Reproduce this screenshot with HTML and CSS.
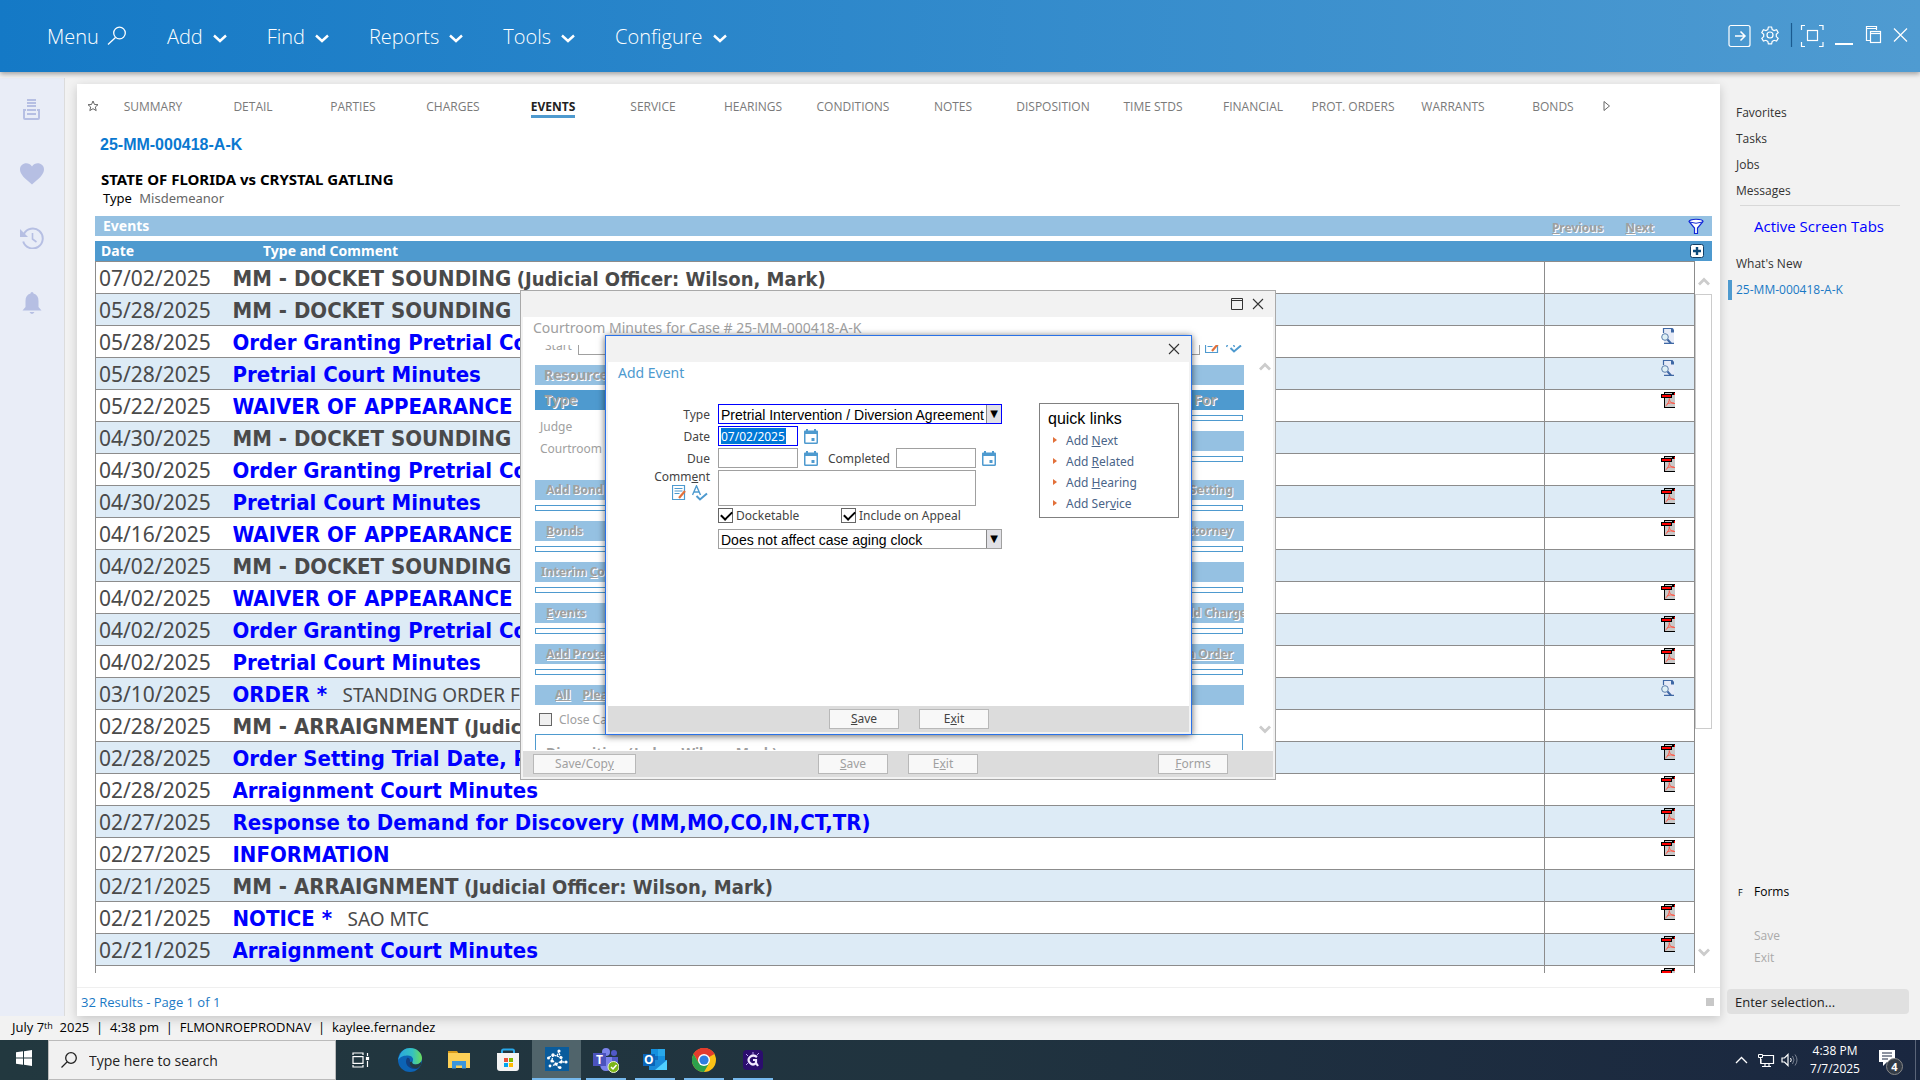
FILE: index.html
```html
<!DOCTYPE html>
<html lang="en">
<head>
    <meta charset="UTF-8">
    <meta name="viewport" content="width=device-width, initial-scale=1.0">
    <title>25-MM-000418-A-K - Events</title>
    <link rel="stylesheet" href="styles.css">
</head>
<body>

    <!-- Shared icons -->
    <svg class="sprite">
        <symbol id="i-chev" viewBox="0 0 14 10"><path d="M1 2.5 7 8l6-5.5" fill="none" stroke="currentColor" stroke-width="2.4"/></symbol>
        <symbol id="i-x" viewBox="0 0 12 12"><path d="M1 1l10 10M11 1 1 11" fill="none" stroke="currentColor" stroke-width="1.1"/></symbol>
        <symbol id="i-pdf" viewBox="0 0 14 16">
            <path d="M3 0h11v16H3z" fill="#000"/>
            <path d="M4 1h7v1H4zM4 6h10v9H4z" fill="#c8c8c8"/>
            <path d="M11 3h3v3h-3z" fill="#c8c8c8"/>
            <path d="M0 2h11v4H0z" fill="#000"/><path d="M1 3h9v2H1zM13 1h1v2h-1z" fill="#f00"/>
            <path d="M4.500 14c2-1 4-5 3.800-7.500C8.500 10 11 12 14 11.500M6 12c2-1 5-1.500 7-1" fill="none" stroke="#ff5a4a" stroke-width="1"/>
        </symbol>
        <symbol id="i-doc" viewBox="0 0 14 16">
            <path d="M3 0h10v16H3z" fill="#e6ebf7"/>
            <path d="M2.500 5V.5h8.500M3 15.300h10" fill="none" stroke="#3f68a5" stroke-width="1.200"/>
            <path d="M10 0h1.500L13 2v2.500h-3z" fill="#3f68a5"/>
            <circle cx="4" cy="9" r="3.300" fill="#dff0f5" stroke="#5d7fae"/><path d="M6.500 11.500 10 15.500" stroke="#3f68a5" stroke-width="2"/>
        </symbol>
        <symbol id="i-cal" viewBox="0 0 14 15">
            <path d="M0 2.500Q0 1.500 1 1.500h1V0h2v1.500h6V0h2v1.500h1q1 0 1 1v11q0 1.500-1.500 1.500h-11Q0 15 0 13.500zM1.500 5v8.500h11V5z" fill="#4e9acf" fill-rule="evenodd"/>
            <path d="M7.500 9h3v3h-3z" fill="#4e9acf"/>
        </symbol>
        <symbol id="i-note" viewBox="0 0 14 15">
            <path d="M.5.5h12v14H.5z" fill="#fff" stroke="#4e9acf" stroke-width="1.200"/>
            <path d="M2.500 3.500h8M2.500 6h8M2.500 8.500h5" stroke="#4e9acf"/>
            <path d="M7 13l6-7" stroke="#e2703a" stroke-width="2.200"/>
        </symbol>
        <symbol id="i-spell" viewBox="0 0 16 16">
            <path d="M.5 10 4.500.8 8.500 10M2 7h5" fill="none" stroke="#4e9acf" stroke-width="1.400"/>
            <path d="M4.500 11l3.500 3.500L15 8.500" fill="none" stroke="#4e9acf" stroke-width="2"/>
        </symbol>
        <symbol id="i-arrow" viewBox="0 0 12 9"><path d="M1 7.500 6 2.500l5 5" fill="none" stroke="#ccc" stroke-width="2.800"/></symbol>
    </svg>

    <!-- Top menu -->
    <header class="topbar">
        <nav class="menu">
            <button class="menu-search">Menu <svg width="20" height="20" viewBox="0 0 20 20"><circle cx="12.500" cy="7" r="5.800" fill="none" stroke="#fff" stroke-width="1.300"/><path d="M8.500 11.500 1 18.500" stroke="#fff" stroke-width="1.300"/></svg></button>
            <button>Add <svg class="chev"><use href="#i-chev"/></svg></button>
            <button>Find <svg class="chev"><use href="#i-chev"/></svg></button>
            <button>Reports <svg class="chev"><use href="#i-chev"/></svg></button>
            <button>Tools <svg class="chev"><use href="#i-chev"/></svg></button>
            <button>Configure <svg class="chev"><use href="#i-chev"/></svg></button>
        </nav>
        <svg class="win-icons" width="180" height="28" viewBox="0 0 180 28" fill="none" stroke="#fff" stroke-width="1.200">
            <rect x="1" y="3.500" width="21" height="21" rx="2"/>
            <path d="M7 14h10M12.500 9.500 17 14l-4.500 4.500" stroke-width="1.500"/>
            <circle cx="42" cy="13" r="3"/>
            <path d="M40.400 5h3.200l.6 2.500 1.900 1.100 2.500-.8 1.600 2.800-1.900 1.700v2.300l1.900 1.700-1.600 2.800-2.500-.8-1.900 1.100-.6 2.500h-3.200l-.6-2.500-1.900-1.100-2.500.8-1.600-2.800 1.900-1.700v-2.300l-1.900-1.700 1.600-2.800 2.500.8 1.900-1.100z"/>
            <path d="M63.500 1v24" stroke="#1a5a8f"/>
            <path d="M73.500 8V3.500H77M91 3.500h4V8M95 20v4.500h-4M77 24.500h-3.500V20"/>
            <rect x="79.500" y="8.500" width="10" height="10"/>
            <path d="M107 22h18" stroke-width="2"/>
            <path d="M142 18.500h-3.500v-14h10V8M138.500 6.500h10"/><rect x="142.500" y="9.500" width="10" height="11"/><path d="M142.500 11.500h10"/>
            <path d="M166 6.500l13 13M179 6.500l-13 13"/>
        </svg>
    </header>

    <div class="workspace">
        <!-- Left rail -->
        <aside class="rail">
            <svg width="18" height="22" viewBox="0 0 18 22"><path d="M4 1h9M4 4h9M4 7h9M4 11h9M4 15h9" stroke="#b6bfe3" stroke-width="2"/><path d="M3 11H1v8q0 1 1 1h13q1 0 1-1v-8h-2" fill="none" stroke="#b6bfe3" stroke-width="2"/></svg>
            <svg width="24" height="22" viewBox="0 0 24 22"><path d="M12 21.500C5 15.500 0 11.500 0 6.500 0 0 8.500-2 12 3.500 15.500-2 24 0 24 6.500c0 5-5 9-12 15z" fill="#b6bfe3"/></svg>
            <svg width="24" height="22" viewBox="0 0 24 22"><path d="M3.800 7A10 10 0 1 1 3.200 14.500" fill="none" stroke="#b6bfe3" stroke-width="2"/><path d="M0 2v8h8z" fill="#b6bfe3"/><path d="M12.500 6v6l4 3" fill="none" stroke="#b6bfe3" stroke-width="1.600"/></svg>
            <svg width="20" height="24" viewBox="0 0 20 24"><path d="M8.500 2.500a1.500 1.500 0 0 1 3 0C15 3.500 16.500 6 16.500 10v6l3 3.500H.5L3.500 16v-6c0-4 1.500-6.500 5-7.500zM7.500 21h5q-2.500 4-5 0z" fill="#b6bfe3"/></svg>
        </aside>

        <!-- Case card -->
        <main class="card">
            <nav class="tabs">
                <svg class="star" width="12" height="12" viewBox="0 0 12 12"><path d="M6 1l1.500 3.500 3.500.2-2.700 2.300.9 3.600L6 8.700l-3.200 1.900.9-3.600L1 4.700l3.500-.2z" fill="none" stroke="#666"/></svg>
                <a href="#">SUMMARY</a><a href="#">DETAIL</a><a href="#">PARTIES</a><a href="#">CHARGES</a><a href="#" class="active"><span>EVENTS</span></a><a href="#">SERVICE</a><a href="#">HEARINGS</a><a href="#">CONDITIONS</a><a href="#">NOTES</a><a href="#">DISPOSITION</a><a href="#">TIME STDS</a><a href="#">FINANCIAL</a><a href="#">PROT. ORDERS</a><a href="#">WARRANTS</a><a href="#">BONDS</a>
                <svg width="8" height="12" viewBox="0 0 8 12"><path d="M1 1.500 6.500 6 1 10.500z" fill="none" stroke="#666"/></svg>
            </nav>

            <div class="case-head">
                <h1>25-MM-000418-A-K</h1>
                <h2>STATE OF FLORIDA vs CRYSTAL GATLING</h2>
                <p><span>Type</span> Misdemeanor</p>
            </div>

            <div class="events">
                <div class="section-bar">
                    <span class="section-title">Events</span>
                    <a href="#" class="embossed prev"><u>P</u>revious</a>
                    <a href="#" class="embossed next"><u>N</u>ext</a>
                    <svg width="16" height="16" viewBox="0 0 16 16"><path d="M1 3.500C1 .5 15 .5 15 3.500L9.500 10v5.500h-3V10z" fill="#fff" stroke="#1128d8" stroke-width="1.200"/><path d="M1.500 4q6.500 2.500 13 0" fill="none" stroke="#1128d8"/></svg>
                </div>
                <div class="column-bar">
                    <span class="col-date">Date</span>
                    <span class="col-type">Type and Comment</span>
                    <svg width="14" height="14" viewBox="0 0 14 14"><rect x=".5" y=".5" width="13" height="13" rx="2" fill="#fff" stroke="#123f66"/><path d="M7 3v8M3 7h8" stroke="#0e4a7a" stroke-width="2.400"/></svg>
                </div>
                <div class="scroll-area">
                    <div class="table-clip">
                        <table>
                            <tr><td class="date">07/02/2025</td><td class="text"><b>MM - DOCKET SOUNDING</b> <b class="officer">(Judicial Officer: Wilson, Mark)</b></td><td class="icon"></td></tr>
                            <tr><td class="date">05/28/2025</td><td class="text"><b>MM - DOCKET SOUNDING</b></td><td class="icon"></td></tr>
                            <tr><td class="date">05/28/2025</td><td class="text"><a href="#">Order Granting Pretrial Continuance</a></td><td class="icon"><svg><use href="#i-doc"/></svg></td></tr>
                            <tr><td class="date">05/28/2025</td><td class="text"><a href="#">Pretrial Court Minutes</a></td><td class="icon"><svg><use href="#i-doc"/></svg></td></tr>
                            <tr><td class="date">05/22/2025</td><td class="text"><a href="#">WAIVER OF APPEARANCE</a></td><td class="icon"><svg><use href="#i-pdf"/></svg></td></tr>
                            <tr><td class="date">04/30/2025</td><td class="text"><b>MM - DOCKET SOUNDING</b></td><td class="icon"></td></tr>
                            <tr><td class="date">04/30/2025</td><td class="text"><a href="#">Order Granting Pretrial Continuance</a></td><td class="icon"><svg><use href="#i-pdf"/></svg></td></tr>
                            <tr><td class="date">04/30/2025</td><td class="text"><a href="#">Pretrial Court Minutes</a></td><td class="icon"><svg><use href="#i-pdf"/></svg></td></tr>
                            <tr><td class="date">04/16/2025</td><td class="text"><a href="#">WAIVER OF APPEARANCE</a></td><td class="icon"><svg><use href="#i-pdf"/></svg></td></tr>
                            <tr><td class="date">04/02/2025</td><td class="text"><b>MM - DOCKET SOUNDING</b></td><td class="icon"></td></tr>
                            <tr><td class="date">04/02/2025</td><td class="text"><a href="#">WAIVER OF APPEARANCE</a></td><td class="icon"><svg><use href="#i-pdf"/></svg></td></tr>
                            <tr><td class="date">04/02/2025</td><td class="text"><a href="#">Order Granting Pretrial Continuance</a></td><td class="icon"><svg><use href="#i-pdf"/></svg></td></tr>
                            <tr><td class="date">04/02/2025</td><td class="text"><a href="#">Pretrial Court Minutes</a></td><td class="icon"><svg><use href="#i-pdf"/></svg></td></tr>
                            <tr><td class="date">03/10/2025</td><td class="text"><a href="#">ORDER *</a> <span class="note">STANDING ORDER FOR PRETRIAL</span></td><td class="icon"><svg><use href="#i-doc"/></svg></td></tr>
                            <tr><td class="date">02/28/2025</td><td class="text"><b>MM - ARRAIGNMENT</b> <b class="officer">(Judicial Officer: Wilson, Mark)</b></td><td class="icon"></td></tr>
                            <tr><td class="date">02/28/2025</td><td class="text"><a href="#">Order Setting Trial Date, Pretrial</a></td><td class="icon"><svg><use href="#i-pdf"/></svg></td></tr>
                            <tr><td class="date">02/28/2025</td><td class="text"><a href="#">Arraignment Court Minutes</a></td><td class="icon"><svg><use href="#i-pdf"/></svg></td></tr>
                            <tr><td class="date">02/27/2025</td><td class="text"><a href="#">Response to Demand for Discovery (MM,MO,CO,IN,CT,TR)</a></td><td class="icon"><svg><use href="#i-pdf"/></svg></td></tr>
                            <tr><td class="date">02/27/2025</td><td class="text"><a href="#">INFORMATION</a></td><td class="icon"><svg><use href="#i-pdf"/></svg></td></tr>
                            <tr><td class="date">02/21/2025</td><td class="text"><b>MM - ARRAIGNMENT</b> <b class="officer">(Judicial Officer: Wilson, Mark)</b></td><td class="icon"></td></tr>
                            <tr><td class="date">02/21/2025</td><td class="text"><a href="#">NOTICE *</a> <span class="note">SAO MTC</span></td><td class="icon"><svg><use href="#i-pdf"/></svg></td></tr>
                            <tr><td class="date">02/21/2025</td><td class="text"><a href="#">Arraignment Court Minutes</a></td><td class="icon"><svg><use href="#i-pdf"/></svg></td></tr>
                            <tr><td class="date"></td><td class="text"></td><td class="icon"><svg><use href="#i-pdf"/></svg></td></tr>
                        </table>
                    </div>
                    <div class="scrollbar">
                        <svg class="arrow"><use href="#i-arrow"/></svg>
                        <div class="thumb"></div>
                        <svg class="arrow down"><use href="#i-arrow"/></svg>
                    </div>
                </div>
            </div>

            <footer class="card-foot">
                <span>32 Results - Page 1 of 1</span>
                <i></i>
            </footer>
        </main>

        <!-- Right panel -->
        <aside class="panel">
            <nav>
                <a href="#">Favorites</a>
                <a href="#">Tasks</a>
                <a href="#">Jobs</a>
                <a href="#">Messages</a>
            </nav>
            <hr>
            <h3>Active Screen Tabs</h3>
            <nav>
                <a href="#">What's New</a>
                <a href="#" class="current">25-MM-000418-A-K</a>
            </nav>
            <div class="panel-actions">
                <a href="#" class="forms"><kbd>F</kbd>Forms</a>
                <a href="#" class="off">Save</a>
                <a href="#" class="off">Exit</a>
            </div>
            <input type="text" class="selection" aria-label="Selection" placeholder="Enter selection...">
        </aside>
    </div>

    <div class="status">July 7<sup>th</sup>&nbsp; 2025 &nbsp;|&nbsp; 4:38 pm &nbsp;|&nbsp; FLMONROEPRODNAV &nbsp;|&nbsp; kaylee.fernandez</div>

    <!-- Windows taskbar -->
    <div class="taskbar">
        <button class="start" aria-label="Start"><svg width="16" height="16" viewBox="0 0 16 16"><path d="M0 2.300 7 1.300V7.500H0zM8 1.200 16 0v7.500H8zM0 8.500h7v6.200l-7-1zM8 8.500h8V16l-8-1.200z" fill="#fff"/></svg></button>
        <label class="search">
            <svg width="16" height="16" viewBox="0 0 16 16"><circle cx="10" cy="6" r="5.300" fill="none" stroke="#222" stroke-width="1.300"/><path d="M6 10 .5 15.500" stroke="#222" stroke-width="1.300"/></svg>
            <input type="text" placeholder="Type here to search">
        </label>
        <div class="apps">
            <button class="app"><svg width="18" height="16" viewBox="0 0 18 16" fill="none" stroke="#fff" stroke-width="1.200"><path d="M1 3V1h10v2M1 13v2h10v-2"/><rect x="1" y="4.600" width="10" height="6.800"/><path d="M15.500 1v3M15.500 9v6"/><rect x="14.500" y="5.500" width="2" height="2" fill="#fff"/></svg></button>
            <button class="app">
                <svg width="24" height="24" viewBox="0 0 24 24">
                    <defs><linearGradient id="edge" x1="0" x2="1"><stop offset="0" stop-color="#2aa5e0"/><stop offset=".6" stop-color="#35c1c0"/><stop offset="1" stop-color="#6bdc5a"/></linearGradient></defs>
                    <circle cx="12" cy="12" r="12" fill="#0c63b5"/>
                    <path d="M1 9C3 3 7 0 12 0c7 0 12 5 12 10 0 4-3 6.500-6.500 6.500-3 0-4-1.500-3-3 2-3-1-6-4.500-6S3 8 0 12z" fill="url(#edge)"/>
                    <path d="M9 10c-3 5 1 11 8 11 2 0 4-.7 5-1.500-5 1-11-2-10-7 .2-2-2-3.500-3-2.500z" fill="#123f80"/>
                    <path d="M14.500 13.500c-1 1.500 0 3 3 3 2 0 4-.8 5.500-2.500 1.500 2-2 6-4 6-4 1-8-2-7-6z" fill="#233a42"/>
                </svg>
            </button>
            <button class="app"><svg width="22" height="18" viewBox="0 0 22 18"><path d="M0 0h9l2 3H0z" fill="#d99c1c"/><path d="M0 2h22v15H0z" fill="#fdd057"/><path d="M4 17.500V10h14v7.500h-4v-3H8v3z" fill="#3c96dc"/></svg></button>
            <button class="app"><svg width="24" height="24" viewBox="0 0 24 24"><path d="M6 6V3q0-1.500 1.500-1.500h9Q18 1.500 18 3v3" fill="none" stroke="#28a8ea" stroke-width="2"/><path d="M1 5h22v15q0 3-3 3H4q-3 0-3-3z" fill="#f3f3f3"/><path d="M8 10h4v4H8z" fill="#e8503a"/><path d="M13 10h4v4h-4z" fill="#7fba00"/><path d="M8 15h4v4H8z" fill="#00a4ef"/><path d="M13 15h4v4h-4z" fill="#ffb900"/></svg></button>
            <button class="app open on"><svg width="24" height="24" viewBox="0 0 24 24"><path d="M0 0h24v24H0z" fill="#0a5c9c"/><path d="M14 4l-2 5-4-1-5 3M12 9l4 2 1 4 4 0M16 11l-2-5M8 8l-1 5 4 4-4 2M11 17l4-2M11 17l3 4" stroke="#fff" stroke-width="1.300" fill="none" stroke-dasharray="2 1"/><g fill="#fff"><circle cx="14" cy="4" r="1.600"/><circle cx="3.500" cy="11" r="1.500"/><circle cx="8" cy="8" r="1.700"/><circle cx="16" cy="10.500" r="1.600"/><circle cx="21" cy="15" r="1.600"/><circle cx="16" cy="15" r="1.500"/><circle cx="7" cy="14" r="1.600"/><circle cx="11" cy="17" r="1.500"/><circle cx="15" cy="20.500" r="1.500"/><circle cx="5" cy="19" r="1.400"/></g></svg></button>
            <button class="app open">
                <svg width="26" height="26" viewBox="0 0 26 26"><circle cx="13" cy="5" r="4" fill="#7b83eb"/><circle cx="21" cy="6" r="3" fill="#5059c9"/><path d="M16 10h9v7q-1 5-6 5z" fill="#5059c9"/><path d="M7 10h12v9q-1 5-6 5t-6-6z" fill="#7b83eb"/><path d="M0 6h13v13H0z" fill="#4b53bc"/><text x="3" y="17" class="logo-letter">T</text><circle cx="20.500" cy="20" r="5.500" fill="#7cb518" stroke="#e8f2d4"/><path d="M18 20l2 2 3.500-4" fill="none" stroke="#fff" stroke-width="1.500"/></svg>
            </button>
            <button class="app open">
                <svg width="24" height="24" viewBox="0 0 24 24"><path d="M8 1h14v14H8z" fill="#1490df"/><path d="M15 1h7v7h-7z" fill="#28a8ea"/><path d="M8 8h7v7H8z" fill="#0f6cbd"/><path d="M6 12h18v10H6z" fill="#1a8ad8"/><path d="M24 12 12 22h12z" fill="#50d0ff"/><path d="M0 6h12v12H0z" fill="#0a64b8"/><text x="1" y="16" class="logo-letter">O</text></svg>
            </button>
            <button class="app open">
                <svg width="24" height="24" viewBox="0 0 24 24"><circle cx="12" cy="12" r="12" fill="#fbc116"/><path d="M12 12 1.600 6A12 12 0 0 1 22.400 6z" fill="#e33b2e"/><path d="M12 6h10.400A12 12 0 0 0 1.600 6L6.800 15z" fill="#e33b2e"/><path d="M1.600 6A12 12 0 0 0 12 24l5.200-9H6.800z" fill="#2da14c"/><circle cx="12" cy="12" r="6" fill="#fff"/><circle cx="12" cy="12" r="4.600" fill="#2f7de1"/></svg>
            </button>
            <button class="app open"><svg width="20" height="20" viewBox="0 0 20 20"><rect width="20" height="20" rx="4" fill="#2b0d6e"/><path d="M14 7q-4-3-7 0t0 6 6 0v-3h-3M13 13l2 3" fill="none" stroke="#f1e9ff" stroke-width="2.200"/><path d="M3 4l2 2M16 3l-2 2M3 15l2-2M10 2v2" stroke="#b79af0"/></svg></button>
        </div>
        <div class="tray">
            <svg width="56" height="16" viewBox="0 0 56 16"><path d="M1 11 6.500 5.500 12 11" fill="none" stroke="#fff" stroke-width="1.300"/><path d="M28 3.500h10.500v8H26V7M30 11.500v3M34 11.500v3M27 14.500h9" fill="none" stroke="#fff" stroke-width="1.200"/><path d="M23.500 2.500h4v3h-4zM25.500 5.500v6" fill="none" stroke="#fff"/></svg>
            <svg width="18" height="14" viewBox="0 0 18 14" fill="none" stroke="#fff"><path d="M1 5v4h2.500L7 12.500v-11L3.500 5z" stroke-width="1.200"/><path d="M9.500 5q1.500 2 0 4"/><path d="M11.500 3q3 4 0 8M14 1.500q4 5.500 0 11" stroke="#788090"/></svg>
            <div class="clock">4:38 PM<br>7/7/2025</div>
            <div class="notify">
                <svg width="16" height="16" viewBox="0 0 16 16"><path d="M0 0h16v12H8l-4 4v-4H0z" fill="#fff"/><path d="M3 3h10M3 6h10M3 9h6" stroke="#1a2740"/></svg>
                <span>4</span>
            </div>
        </div>
    </div>

    <!-- Courtroom minutes window -->
    <section class="window minutes">
        <div class="window-bar">
            <svg width="12" height="12" viewBox="0 0 12 12"><path d="M.5.5h11v11H.5zM.5 2.500h11" fill="none" stroke="#333"/></svg>
            <svg width="12" height="12"><use href="#i-x"/></svg>
        </div>
        <div class="window-body">
            <h4>Courtroom Minutes for Case # 25-MM-000418-A-K</h4>
            <div class="minutes-scroll">
                <div class="minutes-form">
                    <div class="start-row"><label for="start">Start</label><input id="start" type="text"><svg width="14" height="15"><use href="#i-note"/></svg><svg width="16" height="16"><use href="#i-spell"/></svg></div>
                    <div class="bar big"><span>Resources</span></div>
                    <div class="resources">
                        <div>
                            <div class="bar dark big"><span>Type</span></div>
                            <p>Judge</p>
                            <p>Courtroom</p>
                        </div>
                        <div>
                            <div class="bar dark big"><span>For</span></div>
                            <div class="strip"></div>
                            <div class="bar"></div>
                            <div class="strip"></div>
                        </div>
                    </div>
                    <div class="bar"><a href="#">Add Bond</a><a href="#">Setting</a></div>
                    <div class="strip"></div>
                    <div class="bar"><a href="#"><u>B</u>onds</a><a href="#">Attorney</a></div>
                    <div class="strip"></div>
                    <div class="bar interim"><a href="#">Interim <u>C</u>onditions</a></div>
                    <div class="strip"></div>
                    <div class="bar"><a href="#"><u>E</u>vents</a><a href="#" class="edge">Add Char<u>g</u>e</a></div>
                    <div class="strip"></div>
                    <div class="bar"><a href="#"><u>Add Protection</u></a><a href="#"><u>Protection Order</u></a></div>
                    <div class="strip"></div>
                    <div class="bar pleas"><a href="#"><u>All</u></a><a href="#"><u>Pleas</u></a></div>
                    <label class="close-case"><input type="checkbox"> Close Case</label>
                    <div class="disposition">Disposition (Judge: Wilson, Mark)</div>
                </div>
                <div class="minutes-arrows">
                    <svg class="arrow"><use href="#i-arrow"/></svg>
                    <svg class="arrow down"><use href="#i-arrow"/></svg>
                </div>
            </div>
            <div class="window-foot">
                <button class="wide">Save/Cop<u>y</u></button>
                <button class="mid"><u>S</u>ave</button>
                <button>E<u>x</u>it</button>
                <button class="last"><u>F</u>orms</button>
            </div>
        </div>
    </section>

    <!-- Add event dialog -->
    <section class="window add-event">
        <div class="window-bar">
            <svg width="12" height="12"><use href="#i-x"/></svg>
        </div>
        <div class="window-body">
            <h4>Add Event</h4>
            <div class="add-body">
                <form class="event-form">
                    <label for="type">Type</label>
                    <div class="row"><span class="select focus"><select id="type"><option>Pretrial Intervention / Diversion Agreement</option></select></span></div>
                    <label for="date">Date</label>
                    <div class="row"><input id="date" class="short marked" type="text" value="07/02/2025"><svg width="14" height="15"><use href="#i-cal"/></svg></div>
                    <label for="due">Due</label>
                    <div class="row"><input id="due" class="short" type="text"><svg width="14" height="15"><use href="#i-cal"/></svg><label for="completed" class="completed">Completed</label><input id="completed" class="short" type="text"><svg width="14" height="15"><use href="#i-cal"/></svg></div>
                    <div class="comment-label"><label for="comment">Comm<u>e</u>nt</label><div><svg width="14" height="15"><use href="#i-note"/></svg><svg width="16" height="16"><use href="#i-spell"/></svg></div></div>
                    <textarea id="comment"></textarea>
                    <span></span>
                    <div class="row checks"><label><input type="checkbox" checked>Docketable</label><label><input type="checkbox" checked>Include on Appeal</label></div>
                    <span></span>
                    <div class="row"><span class="select"><select aria-label="Aging clock"><option>Does not affect case aging clock</option></select></span></div>
                </form>
                <div class="quick">
                    <h5>quick links</h5>
                    <a href="#">Add <u>N</u>ext</a>
                    <a href="#">Add <u>R</u>elated</a>
                    <a href="#">Add <u>H</u>earing</a>
                    <a href="#">Add Ser<u>v</u>ice</a>
                </div>
            </div>
            <div class="window-foot">
                <button><u>S</u>ave</button>
                <button>E<u>x</u>it</button>
            </div>
        </div>
    </section>

</body>
</html>
```
FILE: styles.css
```css
/* General */
* {
    box-sizing: border-box;
}

body {
    margin: 0;
    height: 100vh;
    display: flex;
    flex-direction: column;
    background: #f2f2f2;
    color: #333;
    font-family: "Open Sans", "Noto Sans", sans-serif;
    font-size: 13px;
    overflow: hidden;
}

a {
    color: inherit;
    text-decoration: none;
}

button,
input,
select,
textarea {
    font: inherit;
    color: inherit;
}

h1, h2, h3, h4, h5, p {
    margin: 0;
}

.sprite {
    display: none;
}

/* Top menu */
.topbar {
    flex: none;
    height: 72px;
    display: flex;
    align-items: center;
    justify-content: space-between;
    padding: 0 12px 0 47px;
    background: linear-gradient(90deg, #1479c6, #4f9bd1);
    box-shadow: 0 2px 5px rgba(0, 0, 0, 0.35);
    z-index: 1;
}

.menu {
    display: flex;
    gap: 40px;
}

.menu button {
    display: flex;
    align-items: center;
    gap: 10px;
    padding: 0;
    border: 0;
    background: none;
    color: #fff;
    font-size: 20px;
    font-weight: 300;
}

.menu .menu-search {
    gap: 8px;
}

.chev {
    width: 14px;
    height: 10px;
    margin-top: 4px;
}

/* Workspace */
.workspace {
    flex: 1;
    display: flex;
    min-height: 0;
}

.rail {
    width: 65px;
    margin-top: 6px;
    padding-top: 21px;
    display: flex;
    flex-direction: column;
    align-items: center;
    gap: 42px;
    background: #e9edf7;
    border-right: 1px solid #dcdcdc;
}

.card {
    flex: 1;
    min-width: 0;
    margin: 12px 0 0 12px;
    display: flex;
    flex-direction: column;
    background: #fff;
    box-shadow: 0 3px 10px rgba(0, 0, 0, 0.18);
}

.tabs {
    display: flex;
    align-items: center;
    height: 44px;
    padding-left: 10px;
    font-size: 12px;
    color: #7a7a7a;
}

.tabs .star {
    margin-right: 4px;
}

.tabs a {
    width: 100px;
    text-align: center;
}

.tabs .active span {
    font-weight: 700;
    color: #222;
    border-bottom: 3px solid #4e9acf;
}

.case-head {
    height: 88px;
    padding: 7px 0 0 23px;
}

.case-head h1 {
    font: bold 16px/20px "Liberation Sans", Arial, sans-serif;
    color: #0a78d0;
}

.case-head h2 {
    margin: 14px 0 0 1px;
    font: bold 15px/20px "Noto Sans", sans-serif;
    color: #000;
}

.case-head p {
    padding-left: 3px;
    font: 13px/18px "Noto Sans", sans-serif;
    color: #666;
}

.case-head p span {
    margin-right: 4px;
    color: #000;
}

/* Events list */
.events {
    flex: 1;
    min-height: 0;
    display: flex;
    flex-direction: column;
    margin: 0 8px 0 18px;
}

.section-bar,
.column-bar {
    flex: none;
    display: flex;
    align-items: center;
    height: 20px;
    padding: 0 8px;
    background: #95c1e2;
    color: #fff;
    font: bold 14px/20px "Noto Sans", sans-serif;
}

.section-title {
    flex: 1;
}

.embossed,
.bar {
    color: #a0a0a0;
    text-shadow: 1px 1px 0 #fff;
}

.prev {
    margin-right: 22px;
}

.next {
    margin-right: 34px;
}

.section-bar .embossed {
    padding-top: 3px;
    font-size: 12px;
}

.column-bar {
    margin-top: 5px;
    padding: 0 8px 0 6px;
    background: #4e9acf;
}

.col-date {
    width: 162px;
}

.col-type {
    flex: 1;
}

.scroll-area {
    flex: 1;
    min-height: 0;
    display: flex;
}

.table-clip {
    flex: 1;
    overflow: hidden;
}

table {
    width: 100%;
    border-collapse: collapse;
    table-layout: fixed;
    font: 21px/29px "Noto Sans", sans-serif;
    color: #4a4a4a;
}

tr:nth-child(even) {
    background: #ddebf6;
}

td {
    height: 32px;
    padding: 1px 0 0;
    border-top: 1px solid #8c8c8c;
    border-bottom: 1px solid #8c8c8c;
    white-space: nowrap;
    overflow: hidden;
}

td.date {
    width: 137px;
    padding-left: 3px;
    border-left: 1px solid #8c8c8c;
}

.text {
    border-right: 1px solid #8c8c8c;
}

.text a,
.text b {
    font: bold 22px/28px "DejaVu Sans Condensed", "DejaVu Sans", sans-serif;
}

.text a {
    color: #00f;
}

.text .officer {
    font-size: 20px;
}

.text .note {
    margin-left: 10px;
    font-size: 19px;
    line-height: 20px;
}

td.icon {
    width: 150px;
    padding-left: 116px;
    border-right: 1px solid #8c8c8c;
    vertical-align: top;
}

.icon svg {
    display: block;
    width: 14px;
    height: 16px;
    margin-top: 1px;
}

.scrollbar {
    width: 17px;
    display: flex;
    flex-direction: column;
    align-items: center;
    padding: 16px 0;
}

.arrow {
    flex: none;
    width: 12px;
    height: 9px;
}

.down {
    transform: rotate(180deg);
}

.scrollbar .down {
    margin-top: auto;
}

.thumb {
    width: 17px;
    height: 64%;
    margin-top: 8px;
    border: 1px solid #ccc;
}

.card-foot {
    flex: none;
    display: flex;
    align-items: center;
    justify-content: space-between;
    height: 29px;
    margin-top: 14px;
    padding: 0 6px 0 4px;
    border-top: 1px solid #efefef;
    color: #1a79c5;
}

.card-foot i {
    width: 8px;
    height: 8px;
    background: #c8c8c8;
}

/* Right panel */
.panel {
    width: 200px;
    display: flex;
    flex-direction: column;
    padding: 31px 11px 2px 7px;
    font-size: 12px;
}

.panel nav a {
    display: block;
    margin: 0 0 6px 1px;
    padding-left: 8px;
    line-height: 20px;
}

.panel hr {
    width: 160px;
    height: 1px;
    margin: 0 0 0 13px;
    border: 0;
    background: #d8d8d8;
}

.panel nav:first-child a:last-child {
    margin-bottom: 4px;
}

.panel h3 {
    margin: 9px 0 17px 27px;
    font-size: 15px;
    font-weight: 400;
    line-height: 22px;
    color: #00f;
}

.panel nav a.current {
    padding-left: 4px;
    border-left: 4px solid #4e9acf;
    color: #1a79c5;
}

.panel-actions {
    margin-top: auto;
    display: flex;
    flex-direction: column;
    padding-left: 27px;
    line-height: 22px;
}

.forms {
    margin: 0 0 22px -16px;
    color: #000;
}

.forms kbd {
    display: inline-block;
    width: 16px;
    font: 9px "Open Sans", sans-serif;
}

.off {
    color: #aaa;
}

.selection {
    height: 25px;
    margin-top: 20px;
    padding: 0 8px;
    border: 0;
    border-radius: 4px;
    background: #e0e0e0;
    font-size: 13px;
}

::placeholder {
    color: #222;
    opacity: 1;
}

/* Status line */
.status {
    flex: none;
    height: 24px;
    padding-left: 12px;
    line-height: 22px;
    color: #000;
}

.status sup {
    font-size: 9px;
    line-height: 0;
    vertical-align: 3px;
}

/* Taskbar */
.taskbar {
    flex: none;
    display: flex;
    height: 40px;
    background: linear-gradient(90deg, #22383f, #20333f 50%, #1a2740);
    color: #fff;
}

.start {
    width: 48px;
    padding: 0;
    border: 0;
    background: none;
}

.search {
    display: flex;
    align-items: center;
    gap: 12px;
    width: 288px;
    padding-left: 12px;
    border: 1px solid #bbb;
    background: #f1f1f1;
}

.search input {
    flex: 1;
    min-width: 0;
    padding: 0;
    border: 0;
    background: none;
    font-size: 14px;
}

.apps {
    display: flex;
    flex: 1;
}

.app {
    display: flex;
    align-items: center;
    justify-content: center;
    width: 49px;
    padding: 0;
    border: 0;
    background: none;
}

.open {
    background: linear-gradient(#76b9ed, #76b9ed) center bottom / 40px 2px no-repeat;
}

.on {
    border-bottom: 2px solid #76b9ed;
    background: #50646b;
}

.logo-letter {
    font: bold 12px "Open Sans", sans-serif;
    fill: #fff;
}

.tray {
    display: flex;
    align-items: center;
    margin-right: 4px;
    border-right: 1px solid #5a6478;
}

.tray svg:nth-child(2) {
    margin-left: -10px;
}

.clock {
    width: 72px;
    text-align: center;
    font-size: 12px;
    line-height: 18px;
}

.notify {
    position: relative;
    width: 44px;
    padding-left: 8px;
}

.notify span {
    position: absolute;
    left: 15px;
    top: 8px;
    width: 17px;
    height: 17px;
    border: 1px solid #888;
    border-radius: 50%;
    background: #333b46;
    font: bold 11px/15px "Open Sans", sans-serif;
    text-align: center;
}

/* Floating windows */
.window {
    position: absolute;
    display: flex;
    flex-direction: column;
    background: #f2f2f2;
    font-family: "Noto Sans", sans-serif;
    font-size: 12px;
    z-index: 2;
}

.window-bar {
    flex: none;
    height: 26px;
    display: flex;
    align-items: center;
    justify-content: flex-end;
    gap: 9px;
    padding-right: 11px;
    color: #333;
}

.window-body {
    flex: 1;
    min-height: 0;
    display: flex;
    flex-direction: column;
    margin: 0 2px 2px;
    background: #fff;
}

.window h4 {
    padding-left: 10px;
    font-size: 14px;
    font-weight: 400;
    line-height: 22px;
}

.window-foot {
    flex: none;
    display: flex;
    align-items: center;
    height: 26px;
    padding: 0 10px;
    gap: 20px;
    background: #dcdcdc;
}

.window-foot button {
    width: 70px;
    height: 20px;
    padding: 0;
    border: 1px solid #b8b8b8;
    background: #f8f8f8;
    line-height: 18px;
}

.minutes {
    left: 520px;
    top: 290px;
    width: 756px;
    height: 490px;
    border: 1px solid #a9a9a9;
    color: #a0a0a0;
}

.minutes-scroll {
    flex: 1;
    min-height: 0;
    display: flex;
    margin: 6px 2px 1px 12px;
    overflow: hidden;
}

.minutes-form {
    width: 709px;
}

.start-row {
    display: flex;
    align-items: center;
    height: 20px;
    margin: -10px 0 9px;
    padding-left: 10px;
}

.start-row label {
    width: 33px;
}

.start-row input {
    width: 622px;
    height: 20px;
    margin-right: 5px;
    border: 1px solid #a0a0a0;
}

.start-row svg:last-child {
    margin-left: 7px;
}

.bar {
    display: flex;
    justify-content: space-between;
    height: 20px;
    margin-top: 10px;
    padding: 0 11px;
    background: #95c1e2;
    font-weight: 700;
    line-height: 20px;
    overflow: hidden;
}

.bar.big {
    padding: 0 9px;
    font-size: 14px;
}

.bar.dark {
    margin-top: 5px;
    background: #4e9acf;
}

.bar.interim {
    padding-left: 6px;
}

.strip {
    height: 6px;
    margin: 5px 1px 0 0;
    border: 1px solid #4e9acf;
}

.bar .edge {
    margin-right: -14px;
}

.resources {
    display: grid;
    grid-template-columns: 650px 1fr;
    height: 85px;
    margin-bottom: 10px;
}

.resources p {
    padding: 6px 0 0 5px;
    line-height: 16px;
}

.resources p:nth-child(2) {
    padding-top: 9px;
}

.bar.pleas {
    justify-content: flex-start;
    gap: 12px;
    padding-left: 20px;
}

.close-case {
    display: flex;
    align-items: center;
    gap: 7px;
    height: 29px;
    padding-left: 4px;
}

.disposition {
    margin-right: 1px;
    height: 40px;
    padding: 8px 10px;
    border: 1px solid #4e9acf;
    font-size: 14px;
    font-weight: 700;
    line-height: 20px;
}

.minutes-arrows {
    display: flex;
    flex: 1;
    flex-direction: column;
    align-items: center;
    justify-content: space-between;
    padding: 17px 0 16px 14px;
}

.window-foot .wide {
    width: 103px;
}

.window-foot .mid {
    margin-left: 162px;
}

.window-foot .last {
    margin-left: 160px;
}

/* Add event dialog */
.add-event {
    left: 605px;
    top: 335px;
    width: 587px;
    height: 400px;
    border: 1px solid #2a72e8;
    box-shadow: 0 1px 7px rgba(0, 0, 0, 0.6);
    color: #444;
}

.add-event h4 {
    color: #4e9acf;
}

.add-body {
    flex: 1;
    display: flex;
    align-items: flex-start;
    padding: 19px 10px 0 0;
}

.event-form {
    display: grid;
    grid-template-columns: 102px 1fr;
    column-gap: 8px;
    row-gap: 2px;
    flex: 1;
    align-items: center;
    text-align: right;
    padding-top: 1px;
}

.row {
    display: flex;
    align-items: center;
    height: 20px;
    text-align: left;
}

.row svg {
    margin-left: 6px;
}

.event-form input[type="text"],
textarea,
.select select {
    border: 1px solid #a0a0a0;
    border-radius: 0;
    background: #fff;
    color: #000;
}

.short {
    width: 80px;
    height: 20px;
    padding: 0 2px;
    font-size: 12px;
}

.event-form input.marked {
    border-color: #00f;
    color: #fff;
    background: linear-gradient(#0078d7, #0078d7) 2px 1px / 65px 16px no-repeat;
}

.completed {
    width: 68px;
    margin: 0 0 0 10px;
}

textarea {
    width: 258px;
    height: 36px;
    resize: none;
}

.comment-label {
    align-self: start;
    line-height: 14px;
}

.comment-label svg {
    margin-left: 6px;
    vertical-align: top;
}

.comment-label > div {
    padding: 1px 2px 0 0;
}

input[type="checkbox"] {
    appearance: none;
    flex: none;
    width: 13px;
    height: 13px;
    margin: 0;
    border: 1px solid #666;
    background: #f0f0f0;
}

.row.checks {
    align-items: flex-start;
    height: 19px;
}

.checks label {
    display: flex;
    align-items: center;
    width: 123px;
    gap: 3px;
    line-height: 15px;
    white-space: nowrap;
}

.checks input[type="checkbox"] {
    width: 15px;
    height: 15px;
    background: #fff;
}

.checks input:checked::after {
    content: "";
    display: block;
    width: 9px;
    height: 5px;
    margin: 2px;
    border-left: 2px solid #000;
    border-bottom: 2px solid #000;
    transform: rotate(-45deg);
}

.select {
    position: relative;
}

.select select {
    appearance: none;
    display: block;
    width: 284px;
    height: 20px;
    padding: 2px 16px 0 2px;
    font: 14px/17px "Liberation Sans", Arial, sans-serif;
    overflow: hidden;
}

.select::after {
    content: "▼";
    position: absolute;
    top: 1px;
    right: 1px;
    width: 14px;
    height: 18px;
    border-left: 1px solid #888;
    background: #e1e1e6;
    color: #000;
    font: 10px/17px "DejaVu Sans", sans-serif;
    text-align: center;
}

.select.focus select {
    border-color: #00f;
}

.quick {
    display: flex;
    flex-direction: column;
    width: 140px;
    height: 115px;
    padding: 4px 8px;
    border: 1px solid #808080;
    color: #4a6488;
    line-height: 21px;
}

.quick h5 {
    font: 16px/22px "Liberation Sans", Arial, sans-serif;
    color: #000;
}

.quick a::before {
    content: "";
    display: inline-block;
    margin: 0 9px 0 5px;
    border: 3px solid transparent;
    border-left: 4px solid #e2703a;
    border-right: 0;
    vertical-align: 2px;
}

.add-event .window-foot {
    justify-content: center;
    padding: 0 0 0 21px;
}
```
